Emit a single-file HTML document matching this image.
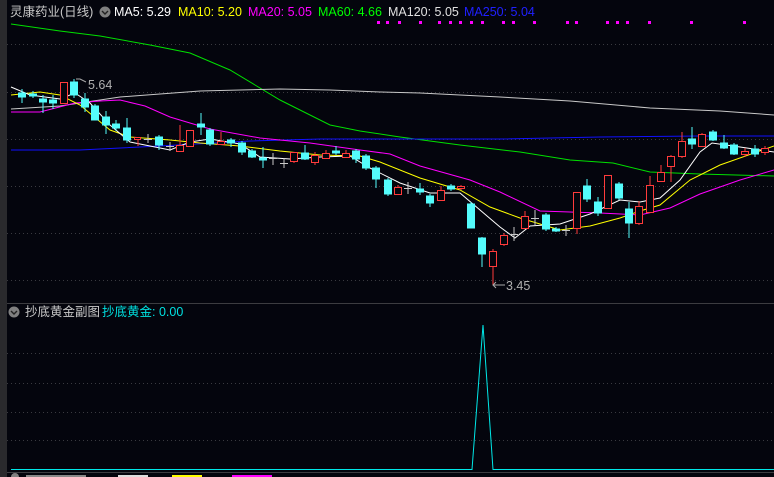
<!DOCTYPE html>
<html><head><meta charset="utf-8"><style>
html,body{margin:0;padding:0;background:#04050d;width:774px;height:477px;overflow:hidden}
svg{display:block}
text{font-family:"Liberation Sans","Noto Sans CJK SC",sans-serif;font-size:12.5px}
</style></head><body>
<svg width="774" height="477" viewBox="0 0 774 477" xmlns="http://www.w3.org/2000/svg">
<rect width="774" height="477" fill="#04050d"/>
<rect x="0" y="0" width="7" height="477" fill="#2a2a2d"/>
<g stroke="#3a3a40" stroke-dasharray="1,3" stroke-width="1">
<line x1="7" y1="44.5" x2="774" y2="44.5"/><line x1="7" y1="92.5" x2="774" y2="92.5"/>
<line x1="7" y1="139.5" x2="774" y2="139.5"/><line x1="7" y1="186.5" x2="774" y2="186.5"/>
<line x1="7" y1="233.5" x2="774" y2="233.5"/><line x1="7" y1="280.5" x2="774" y2="280.5"/>
<line x1="7" y1="353.5" x2="774" y2="353.5"/><line x1="7" y1="383.5" x2="774" y2="383.5"/>
<line x1="7" y1="412.5" x2="774" y2="412.5"/><line x1="7" y1="440.5" x2="774" y2="440.5"/>
</g>
<line x1="7" y1="303.5" x2="774" y2="303.5" stroke="#3c3c40"/>
<line x1="7" y1="472.5" x2="774" y2="472.5" stroke="#3c3c40"/>
<!-- header -->
<text x="10" y="16" fill="#c8c8c8">灵康药业(日线)</text>
<circle cx="105" cy="12" r="5.5" fill="#808080"/><path d="M102 11 L105 14 L108 11" stroke="#222" stroke-width="1.4" fill="none"/>
<text x="114" y="16" fill="#ffffff">MA5: 5.29</text>
<text x="178" y="16" fill="#ffff00">MA10: 5.20</text>
<text x="248" y="16" fill="#ff00ff">MA20: 5.05</text>
<text x="318" y="16" fill="#00ff00">MA60: 4.66</text>
<text x="388" y="16" fill="#e0e0e0">MA120: 5.05</text>
<text x="464" y="16" fill="#2020ff">MA250: 5.04</text>
<g fill="#ff00ff">
<rect x="377" y="21" width="3" height="3"/><rect x="386" y="21" width="3" height="3"/><rect x="398" y="21" width="3" height="3"/><rect x="419" y="21" width="3" height="3"/><rect x="438" y="21" width="3" height="3"/><rect x="449" y="21" width="3" height="3"/><rect x="459" y="21" width="3" height="3"/><rect x="470" y="21" width="3" height="3"/><rect x="481" y="21" width="3" height="3"/><rect x="502" y="21" width="3" height="3"/><rect x="512" y="21" width="3" height="3"/><rect x="533" y="21" width="3" height="3"/><rect x="566" y="21" width="3" height="3"/><rect x="575" y="21" width="3" height="3"/><rect x="606" y="21" width="3" height="3"/><rect x="616" y="21" width="3" height="3"/><rect x="626" y="21" width="3" height="3"/><rect x="648" y="21" width="3" height="3"/><rect x="690" y="21" width="3" height="3"/><rect x="743" y="21" width="3" height="3"/>
</g>
<!-- MAs -->
<g fill="none" stroke-width="1">
<polyline stroke="#00e000" points="11,24 60,31 100,36 150,45 190,53 230,70 255,85 280,100 300,110 330,125 360,131 400,137 460,145 520,152 570,160 613,163 650,172 700,174 774,176"/>
<polyline stroke="#c8c8c8" points="11,109 60,106 120,97 160,94 200,91 240,90 280,89 330,90 380,92 420,93 460,95 500,97 570,101 650,108 720,111 774,115"/>
<polyline stroke="#1010ff" points="11,150 80,150 160,146 250,141 320,139 400,139 500,139 600,137 700,136 774,136"/>
<polyline stroke="#ff00ff" points="11,112 40,112 75,103 100,101 120,100 145,106 170,117 210,129 260,138 310,143 360,150 390,154 420,166 470,180 500,192 540,211 600,213 640,215 670,208 700,194 740,180 774,170"/>
<polyline stroke="#ffff00" points="11,95 40,92 60,95 80,105 110,130 130,137 170,140 200,143 240,146 280,151 320,155 360,156 380,162 420,178 460,190 490,207 520,218 560,230 590,226 620,218 640,211 660,205 690,180 720,165 774,146"/>
<polyline stroke="#ffffff" points="11,87 30,95 60,99 75,93 90,103 110,125 130,142 150,146 170,150 190,142 210,139 240,144 260,157 290,159 320,157 350,156 370,168 400,183 430,193 460,193 480,210 500,227 515,238 530,226 560,224 590,214 620,200 640,202 660,198 680,180 700,152 712,143 740,147 774,152"/>
</g>
<!-- candles: cyan -->
<g stroke="#54fcfc" fill="#54fcfc">
<line x1="22" y1="89" x2="22" y2="103"/><rect x="18.5" y="93" width="7" height="4"/>
<line x1="33" y1="91" x2="33" y2="98"/><rect x="29.5" y="94" width="7" height="2"/>
<line x1="43" y1="95" x2="43" y2="113"/><rect x="39.5" y="99" width="7" height="3"/>
<line x1="53" y1="95" x2="53" y2="109"/><rect x="49.5" y="100" width="7" height="3"/>
<line x1="74" y1="79" x2="74" y2="98"/><rect x="70.5" y="82" width="7" height="13"/>
<line x1="85" y1="93" x2="85" y2="112"/><rect x="81.5" y="99" width="7" height="8"/>
<line x1="95" y1="104" x2="95" y2="120"/><rect x="91.5" y="106" width="7" height="14"/>
<line x1="106" y1="111" x2="106" y2="134"/><rect x="102.5" y="117" width="7" height="8"/>
<line x1="116" y1="120" x2="116" y2="131"/><rect x="112.5" y="124" width="7" height="4"/>
<line x1="127" y1="118" x2="127" y2="143"/><rect x="123.5" y="128" width="7" height="12"/>
<line x1="159" y1="135" x2="159" y2="150"/><rect x="155.5" y="137" width="7" height="8"/>
<line x1="201" y1="113" x2="201" y2="135"/><rect x="197.5" y="124" width="7" height="3"/>
<line x1="210" y1="128" x2="210" y2="146"/><rect x="206.5" y="130" width="7" height="14"/>
<line x1="231" y1="138" x2="231" y2="147"/><rect x="227.5" y="140" width="7" height="3"/>
<line x1="242" y1="141" x2="242" y2="155"/><rect x="238.5" y="143" width="7" height="9"/>
<line x1="252" y1="149" x2="252" y2="158"/><rect x="248.5" y="151" width="7" height="6"/>
<line x1="263" y1="147" x2="263" y2="168"/><rect x="259.5" y="158" width="7" height="2"/>
<line x1="305" y1="145" x2="305" y2="160"/><rect x="301.5" y="153" width="7" height="6"/>
<line x1="336" y1="146" x2="336" y2="155"/><rect x="332.5" y="151" width="7" height="2"/>
<line x1="356" y1="149" x2="356" y2="163"/><rect x="352.5" y="151" width="7" height="8"/>
<line x1="366" y1="154" x2="366" y2="170"/><rect x="362.5" y="156" width="7" height="12"/>
<line x1="376" y1="166" x2="376" y2="188"/><rect x="372.5" y="168" width="7" height="11"/>
<line x1="388" y1="178" x2="388" y2="196"/><rect x="384.5" y="180" width="7" height="14"/>
<line x1="420" y1="183" x2="420" y2="195"/><rect x="416.5" y="189" width="7" height="3"/>
<line x1="430" y1="194" x2="430" y2="207"/><rect x="426.5" y="196" width="7" height="7"/>
<line x1="451" y1="184" x2="451" y2="191"/><rect x="447.5" y="186" width="7" height="3"/>
<line x1="471" y1="202" x2="471" y2="228"/><rect x="467.5" y="204" width="7" height="24"/>
<line x1="482" y1="237" x2="482" y2="267"/><rect x="478.5" y="238" width="7" height="16"/>
<line x1="546" y1="213" x2="546" y2="231"/><rect x="542.5" y="215" width="7" height="14"/>
<line x1="556" y1="227" x2="556" y2="232"/><rect x="552.5" y="229" width="7" height="2"/>
<line x1="587" y1="179" x2="587" y2="202"/><rect x="583.5" y="186" width="7" height="13"/>
<line x1="598" y1="197" x2="598" y2="216"/><rect x="594.5" y="202" width="7" height="11"/>
<line x1="619" y1="182" x2="619" y2="200"/><rect x="615.5" y="184" width="7" height="14"/>
<line x1="629" y1="202" x2="629" y2="238"/><rect x="625.5" y="209" width="7" height="14"/>
<line x1="692" y1="127" x2="692" y2="149"/><rect x="688.5" y="139" width="7" height="5"/>
<line x1="713" y1="130" x2="713" y2="141"/><rect x="709.5" y="132" width="7" height="8"/>
<line x1="724" y1="135" x2="724" y2="149"/><rect x="720.5" y="143" width="7" height="5"/>
<line x1="734" y1="143" x2="734" y2="155"/><rect x="730.5" y="145" width="7" height="9"/>
<line x1="755" y1="145" x2="755" y2="157"/><rect x="751.5" y="149" width="7" height="5"/>
</g>
<!-- red hollow -->
<g stroke="#ff3b3b" fill="#04050d">
<line x1="64" y1="82" x2="64" y2="104"/><rect x="60.5" y="82.5" width="7" height="21"/>
<line x1="138" y1="137" x2="138" y2="146"/><rect x="134.5" y="137.5" width="6" height="2"/>
<line x1="180" y1="125" x2="180" y2="152"/><rect x="176.5" y="145.5" width="7" height="6"/>
<line x1="190" y1="130" x2="190" y2="147"/><rect x="186.5" y="130.5" width="7" height="16"/>
<line x1="221" y1="132" x2="221" y2="144"/><rect x="217.5" y="141.5" width="7" height="3"/>
<line x1="294" y1="152" x2="294" y2="163"/><rect x="290.5" y="152.5" width="7" height="9"/>
<line x1="315" y1="152" x2="315" y2="165"/><rect x="311.5" y="155.5" width="7" height="7"/>
<line x1="326" y1="150" x2="326" y2="159"/><rect x="322.5" y="153.5" width="7" height="5"/>
<line x1="346" y1="150" x2="346" y2="158"/><rect x="342.5" y="153.5" width="7" height="4"/>
<line x1="398" y1="185" x2="398" y2="195"/><rect x="394.5" y="187.5" width="7" height="7"/>
<line x1="441" y1="186" x2="441" y2="201"/><rect x="437.5" y="190.5" width="7" height="10"/>
<line x1="461" y1="185" x2="461" y2="190"/><rect x="457.5" y="186.5" width="7" height="2"/>
<line x1="493" y1="249" x2="493" y2="285"/><rect x="489.5" y="251.5" width="7" height="15"/>
<line x1="504" y1="233" x2="504" y2="246"/><rect x="500.5" y="235.5" width="7" height="9"/>
<line x1="525" y1="211" x2="525" y2="229"/><rect x="521.5" y="216.5" width="7" height="12"/>
<line x1="577" y1="192" x2="577" y2="234"/><rect x="573.5" y="192.5" width="7" height="36"/>
<line x1="608" y1="175" x2="608" y2="209"/><rect x="604.5" y="175.5" width="7" height="33"/>
<line x1="639" y1="201" x2="639" y2="225"/><rect x="635.5" y="206.5" width="7" height="17"/>
<line x1="650" y1="176" x2="650" y2="213"/><rect x="646.5" y="185.5" width="7" height="27"/>
<line x1="661" y1="165" x2="661" y2="182"/><rect x="657.5" y="172.5" width="7" height="9"/>
<line x1="671" y1="155" x2="671" y2="182"/><rect x="667.5" y="156.5" width="7" height="10"/>
<line x1="682" y1="132" x2="682" y2="158"/><rect x="678.5" y="141.5" width="7" height="15"/>
<line x1="702" y1="133" x2="702" y2="147"/><rect x="698.5" y="134.5" width="7" height="12"/>
<line x1="745" y1="148" x2="745" y2="157"/><rect x="741.5" y="151.5" width="7" height="3"/>
<line x1="765" y1="146" x2="765" y2="155"/><rect x="761.5" y="148.5" width="7" height="4"/>
</g>
<!-- doji -->
<g stroke="#c8c8c8">
<line x1="148" y1="134" x2="148" y2="143"/><line x1="144" y1="139.5" x2="152" y2="139.5"/>
<line x1="170" y1="142" x2="170" y2="151"/><line x1="166" y1="146.5" x2="174" y2="146.5"/>
<line x1="273" y1="153" x2="273" y2="165"/><line x1="269" y1="158.5" x2="277" y2="158.5"/>
<line x1="284" y1="158" x2="284" y2="168"/><line x1="280" y1="163.5" x2="288" y2="163.5"/>
<line x1="408" y1="182" x2="408" y2="194"/><line x1="404" y1="188.5" x2="412" y2="188.5"/>
<line x1="514" y1="227" x2="514" y2="241"/><line x1="510" y1="234.5" x2="518" y2="234.5"/>
<line x1="535" y1="210" x2="535" y2="225"/><line x1="531" y1="218.5" x2="539" y2="218.5"/>
<line x1="566" y1="225" x2="566" y2="236"/><line x1="562" y1="230.5" x2="570" y2="230.5"/>
</g>
<path d="M76 79 L80 79 L86 82" stroke="#aaa" fill="none"/>
<text x="88" y="89" fill="#b0b0b0">5.64</text>
<path d="M493 285 L505 285 M496 282 L493 285 L496 288" stroke="#aaa" fill="none"/>
<text x="506" y="290" fill="#b0b0b0">3.45</text>
<!-- sub chart -->
<circle cx="14" cy="312" r="5.5" fill="#808080"/><path d="M11 311 L14 314 L17 311" stroke="#222" stroke-width="1.4" fill="none"/>
<text x="25" y="316" fill="#c8c8c8">抄底黄金副图</text>
<text x="102" y="316" fill="#00e0e0">抄底黄金: 0.00</text>
<polyline fill="none" stroke="#00e8e8" stroke-width="1" points="11,469.5 472,469.5 483,325 493,469.5 774,469.5"/>
<g>
<circle cx="15" cy="477" r="4" fill="#808080"/>
<rect x="26" y="475" width="60" height="2" fill="#888"/>
<rect x="118" y="475" width="30" height="2" fill="#ddd"/>
<rect x="172" y="475" width="30" height="2" fill="#ffff00"/>
<rect x="232" y="475" width="40" height="2" fill="#ff00ff"/>
</g>
</svg>
</body></html>
